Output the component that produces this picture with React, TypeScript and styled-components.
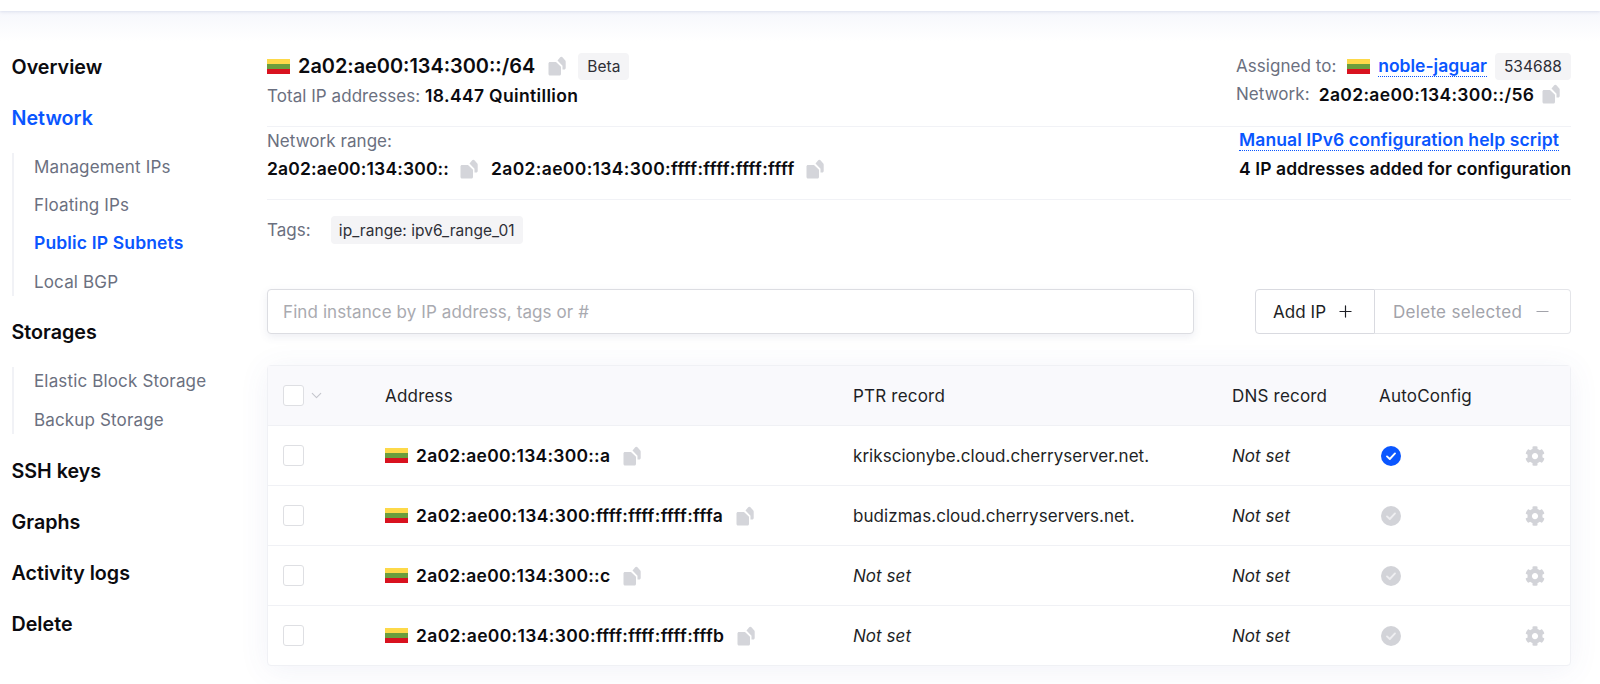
import React from "react";
import styled, { createGlobalStyle } from "styled-components";
import { FaCog } from "react-icons/fa";
import { Plus, Minus, ChevronDown } from "lucide-react";

const GlobalStyle = createGlobalStyle`
  html, body {
    margin: 0;
    padding: 0;
    background: #fff;
    font-family: Inter, "Liberation Sans", sans-serif;
    color: #0b0b0f;
  }
  * { box-sizing: border-box; }
`;

const Flag: React.FC = () => (
  <FlagBox>
    <i />
    <i />
    <i />
  </FlagBox>
);

const CopyIcon: React.FC = () => (
  <CopySvg viewBox="0 0 20 20" width="20" height="20">
    <path d="M10.5 4.5 13 1.4c.7-.9 2-.9 2.7 0l2.6 3.2c.3.3.4.7.4 1.1V12c0 .9-.6 1.5-1.5 1.5h-1.7V9.8z" fill="#d4d5da" />
    <path d="M1.5 7.5C1.500 6.600 2.100 6 3 6h6l5 4.800V18c0 .9-.6 1.500-1.500 1.500H3c-.9 0-1.500-.6-1.500-1.500z" fill="#d4d5da" />
  </CopySvg>
);

const CheckIcon: React.FC<{ on?: boolean }> = ({ on }) => (
  <svg viewBox="0 0 20 20" width="20" height="20">
    <circle cx="10" cy="10" r="10" fill={on ? "#0a56ff" : "#d2d3d8"} />
    <path d="M6 10.4 8.800 13 14 7.400" fill="none" stroke={on ? "#fff" : "#eeeef1"} strokeWidth="1.9" strokeLinecap="round" strokeLinejoin="round" />
  </svg>
);

type Row = { ip: string; ptr?: string; on?: boolean };

const rows: Row[] = [
  { ip: "2a02:ae00:134:300::a", ptr: "krikscionybe.cloud.cherryserver.net.", on: true },
  { ip: "2a02:ae00:134:300:ffff:ffff:ffff:fffa", ptr: "budizmas.cloud.cherryservers.net." },
  { ip: "2a02:ae00:134:300::c" },
  { ip: "2a02:ae00:134:300:ffff:ffff:ffff:fffb" },
];

export default function App() {
  return (
    <>
      <GlobalStyle />
      <TopBar />
      <Page>
        <Sidebar>
          <NavTitle>Overview</NavTitle>
          <NavTitle $active>Network</NavTitle>
          <SubNav>
            <SubItem>Management IPs</SubItem>
            <SubItem>Floating IPs</SubItem>
            <SubItem $active>Public IP Subnets</SubItem>
            <SubItem>Local BGP</SubItem>
          </SubNav>
          <NavTitle>Storages</NavTitle>
          <SubNav>
            <SubItem>Elastic Block Storage</SubItem>
            <SubItem>Backup Storage</SubItem>
          </SubNav>
          <NavTitle>SSH keys</NavTitle>
          <NavTitle>Graphs</NavTitle>
          <NavTitle>Activity logs</NavTitle>
          <NavTitle>Delete</NavTitle>
        </Sidebar>
        <Main>
          <InfoBlock>
            <div>
              <TitleRow>
                <Flag />
                <Title>2a02:ae00:134:300::/64</Title>
                <CopyIcon />
                <Badge>Beta</Badge>
              </TitleRow>
              <InfoLine>
                <Muted>Total IP addresses:</Muted> <Strong $spacing={0.35}>18.447 Quintillion</Strong>
              </InfoLine>
            </div>
            <RightCol>
              <AssignedRow>
                <Muted>Assigned to:</Muted>
                <Flag />
                <InfoLink>noble-jaguar</InfoLink>
                <Badge>534688</Badge>
              </AssignedRow>
              <NetworkRow>
                <Muted>Network:</Muted>
                <Strong $spacing={0.35}>2a02:ae00:134:300::/56</Strong>
                <CopyIcon />
              </NetworkRow>
            </RightCol>
          </InfoBlock>
          <RangeBlock>
            <div>
              <Muted>Network range:</Muted>
              <RangeValues>
                <Strong>2a02:ae00:134:300::</Strong>
                <CopyIcon />
                <Strong $spacing={0.35}>2a02:ae00:134:300:ffff:ffff:ffff:ffff</Strong>
                <CopyIcon />
              </RangeValues>
            </div>
            <ScriptCol>
              <ScriptLink>Manual IPv6 configuration help script</ScriptLink>
              <ScriptNote>4 IP addresses added for configuration</ScriptNote>
            </ScriptCol>
          </RangeBlock>
          <TagsRow>
            <Muted>Tags:</Muted>
            <Tag>ip_range: ipv6_range_01</Tag>
          </TagsRow>
          <Toolbar>
            <SearchBox>Find instance by IP address, tags or #</SearchBox>
            <ButtonGroup>
              <AddButton>
                Add IP <Plus size={19} strokeWidth={1.5} />
              </AddButton>
              <DeleteButton>
                Delete selected <Minus size={19} strokeWidth={1.5} />
              </DeleteButton>
            </ButtonGroup>
          </Toolbar>
          <Table>
            <HeadRow>
              <CheckCell>
                <Checkbox />
                <ChevronDown size={17} strokeWidth={1.5} color="#c4c5cc" />
              </CheckCell>
              <span>Address</span>
              <span>PTR record</span>
              <span>DNS record</span>
              <span>AutoConfig</span>
            </HeadRow>
            {rows.map((row) => (
              <BodyRow key={row.ip}>
                <CheckCell>
                  <Checkbox />
                </CheckCell>
                <AddressCell>
                  <Flag />
                  <Strong $spacing={row.ip.length > 30 ? 0.35 : 0.25}>{row.ip}</Strong>
                  <CopyIcon />
                </AddressCell>
                {row.ptr ? <span>{row.ptr}</span> : <NotSet>Not set</NotSet>}
                <NotSet>Not set</NotSet>
                <IconCell>
                  <CheckIcon on={row.on} />
                </IconCell>
                <GearCell>
                  <FaCog size={20} color="#d2d3d8" />
                </GearCell>
              </BodyRow>
            ))}
          </Table>
        </Main>
      </Page>
    </>
  );
}

const TopBar = styled.div`
  height: 11px;
  background: #fff;
  box-shadow: 0 1px 3px rgba(90, 100, 160, 0.16);
  position: relative;
`;

const Page = styled.div`
  display: grid;
  grid-template-columns: 267px 1304px;
  height: 673px;
  overflow: hidden;
  background: linear-gradient(#f6f7fc 0, #fff 30px);
`;

const Sidebar = styled.nav`
  display: flex;
  flex-direction: column;
  padding: 44px 0 0 11.5px;
`;

const NavTitle = styled.div<{ $active?: boolean }>`
  height: 51px;
  line-height: 24px;
  font-size: 19.7px;
  font-weight: 600;
  color: ${(p) => (p.$active ? "#0a56ff" : "#0b0b0f")};
`;

const SubNav = styled.div`
  display: flex;
  flex-direction: column;
  gap: 10.2px;
  margin: -4px 0 24.9px;
  border-left: 2px solid #f1f2f6;
  padding-left: 20.5px;
`;

const SubItem = styled.div<{ $active?: boolean }>`
  height: 28px;
  line-height: 28px;
  font-size: ${(p) => (p.$active ? "17.5px" : "17px")};
  font-weight: ${(p) => (p.$active ? 600 : 400)};
  letter-spacing: 0.15px;
  color: ${(p) => (p.$active ? "#0a56ff" : "#6b7080")};
`;

const Main = styled.main`
  display: flex;
  flex-direction: column;
  padding-top: 41px;
  font-size: 17px;
  letter-spacing: 0.05px;
  color: #1e1f26;
`;

const InfoBlock = styled.div`
  display: flex;
  justify-content: space-between;
  height: 75px;
  border-bottom: 1px solid #f1f2f6;
`;

const FlagBox = styled.span`
  display: inline-flex;
  flex-direction: column;
  flex: none;
  width: 23px;
  height: 15px;
  i {
    flex: 1;
  }
  i:nth-child(1) {
    background: #fdd94a;
  }
  i:nth-child(2) {
    background: #6a9e3d;
  }
  i:nth-child(3) {
    background: #d9121f;
  }
`;

const CopySvg = styled.svg`
  flex: none;
`;

const Badge = styled.span`
  display: inline-flex;
  align-items: center;
  height: 27px;
  padding: 0 9px;
  border-radius: 4px;
  background: #f4f4f6;
  font-size: 15.5px;
  color: #2e2f36;
`;

const TitleRow = styled.div`
  display: flex;
  align-items: center;
  height: 28px;
  gap: 8px;
  svg {
    margin-left: 4px;
  }
  ${Badge} {
    margin-left: 3px;
  }
`;

const Title = styled.span`
  font-size: 19.9px;
  font-weight: 600;
  letter-spacing: 0;
  color: #0b0b0f;
`;

const InfoLine = styled.div`
  margin-top: 5px;
  line-height: 22px;
`;

const Muted = styled.span`
  color: #6b7080;
  font-weight: 400;
`;

const Strong = styled.span<{ $spacing?: number }>`
  font-size: 17.5px;
  font-weight: 600;
  letter-spacing: ${(p) => p.$spacing ?? 0.15}px;
  white-space: nowrap;
  color: #0b0b0f;
`;

const RightCol = styled.div`
  display: flex;
  flex-direction: column;
  width: 335px;
`;

const AssignedRow = styled.div`
  display: flex;
  align-items: center;
  gap: 8px;
  height: 28px;
  ${Muted} {
    margin-right: auto;
  }
`;

const NetworkRow = styled.div`
  display: flex;
  align-items: center;
  gap: 9px;
  margin-top: 3px;
  height: 22px;
  svg {
    margin-left: -2px;
  }
`;

const dottedLink = `
  color: #0a56ff;
  font-weight: 600;
  font-size: 17.5px;
  border-bottom: 1px dotted #0a56ff;
  line-height: 20px;
`;

const InfoLink = styled.span`
  ${dottedLink}
  letter-spacing: 0;
`;

const ScriptLink = styled.span`
  ${dottedLink}
  letter-spacing: 0.1px;
  align-self: flex-start;
`;

const ScriptNote = styled.span`
  font-size: 17.5px;
  font-weight: 600;
  letter-spacing: 0.1px;
  white-space: nowrap;
  color: #0b0b0f;
`;

const RangeBlock = styled.div`
  display: flex;
  justify-content: space-between;
  height: 73px;
  padding-top: 3px;
  line-height: 22px;
  border-bottom: 1px solid #f1f2f6;
`;

const RangeValues = styled.div`
  display: flex;
  align-items: center;
  gap: 10px;
  margin-top: 6px;
  svg {
    margin-right: 2px;
  }
`;

const ScriptCol = styled.div`
  display: flex;
  flex-direction: column;
  gap: 7px;
  width: 332px;
`;

const TagsRow = styled.div`
  display: flex;
  align-items: center;
  gap: 20px;
  height: 60px;
`;

const Tag = styled.span`
  display: inline-flex;
  align-items: center;
  height: 28px;
  padding: 0 8px;
  border-radius: 4px;
  background: #f4f4f6;
  font-size: 15.5px;
  color: #2e2f36;
`;

const Toolbar = styled.div`
  display: flex;
  justify-content: space-between;
  margin-top: 29px;
  height: 45px;
`;

const SearchBox = styled.div`
  display: flex;
  align-items: center;
  width: 927px;
  padding-left: 15px;
  border: 1px solid #dcdde2;
  border-radius: 4px;
  background: #fff;
  box-shadow: 0 3px 8px rgba(80, 90, 140, 0.1);
  color: #a9aab0;
  letter-spacing: 0.1px;
`;

const ButtonGroup = styled.div`
  display: flex;
  width: 316px;
  border-radius: 4px;
  background: #fff;
`;

const AddButton = styled.div`
  display: flex;
  align-items: center;
  gap: 10px;
  width: 120px;
  padding-left: 17px;
  border: 1px solid #d9dae0;
  border-radius: 4px 0 0 4px;
  color: #1e1f26;
`;

const DeleteButton = styled.div`
  display: flex;
  flex: 1;
  align-items: center;
  gap: 11px;
  padding-left: 18px;
  border: 1px solid #e4e5e9;
  border-left: 0;
  border-radius: 0 4px 4px 0;
  color: #a2a3aa;
  letter-spacing: 0.3px;
`;

const Table = styled.div`
  margin-top: 31px;
  border: 1px solid #f0f1f5;
  border-radius: 4px;
  background: #fff;
  box-shadow: 0 4px 30px rgba(80, 90, 160, 0.08);
`;

const rowGrid = `
  display: grid;
  grid-template-columns: 102px 468px 379px 147px 1fr auto;
  align-items: center;
  height: 60px;
  padding: 0 25px 0 15px;
`;

const HeadRow = styled.div`
  ${rowGrid}
  height: 59px;
  background: #f9f9fc;
  letter-spacing: 0.2px;
`;

const BodyRow = styled.div`
  ${rowGrid}
  border-top: 1px solid #f0f1f5;
`;

const CheckCell = styled.div`
  display: flex;
  align-items: center;
  gap: 4px;
`;

const Checkbox = styled.div`
  width: 21px;
  height: 21px;
  border: 1.5px solid #dedfe3;
  border-radius: 3px;
  background: #fff;
`;

const AddressCell = styled.div`
  display: flex;
  align-items: center;
  gap: 8px;
  svg {
    margin-left: 4px;
  }
`;

const NotSet = styled.span`
  font-style: italic;
`;

const IconCell = styled.div`
  display: flex;
  padding-left: 2px;
`;

const GearCell = styled.div`
  display: flex;
`;
